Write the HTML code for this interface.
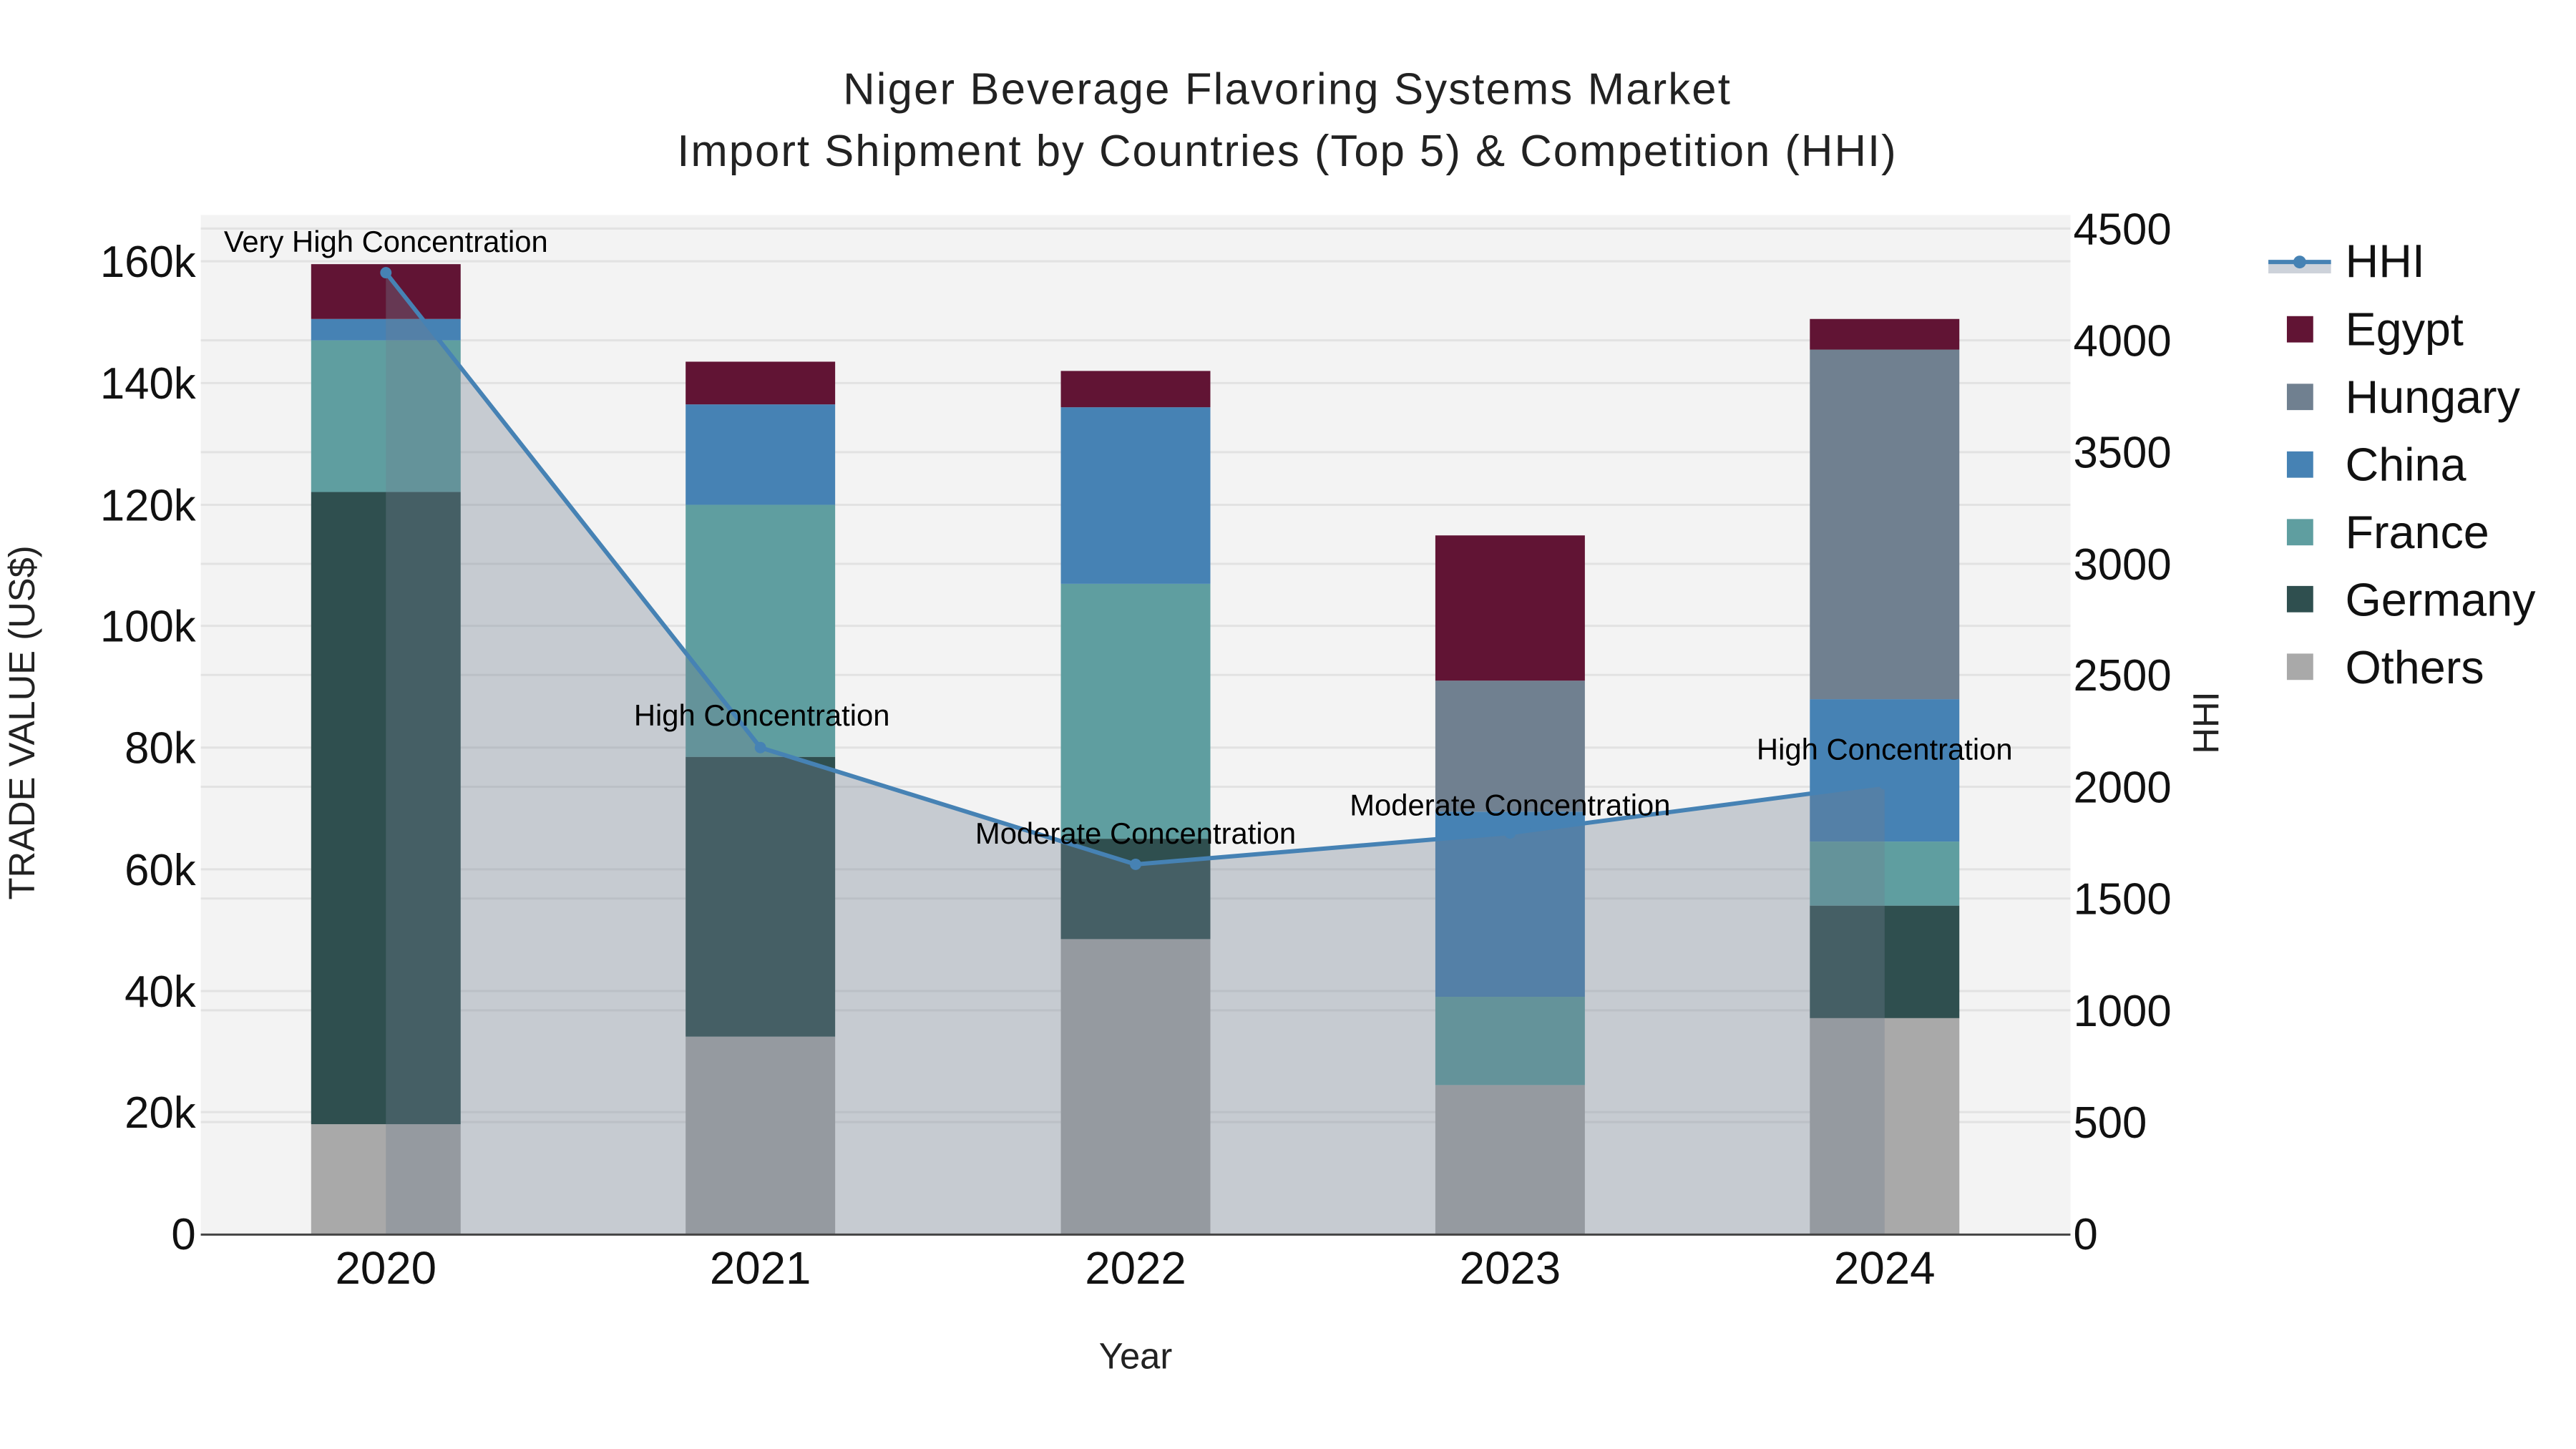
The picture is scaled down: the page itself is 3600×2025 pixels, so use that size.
<!DOCTYPE html>
<html><head><meta charset="utf-8"><style>html,body{margin:0;padding:0;background:#fff}svg{display:block}</style></head>
<body>
<svg width="3600" height="2025" viewBox="0 0 3600 2025" xmlns="http://www.w3.org/2000/svg" font-family="Liberation Sans, sans-serif">
<rect width="3600" height="2025" fill="#fff"/>
<g transform="scale(0.995)">
<rect x="282" y="302" width="2626" height="1431" fill="#f3f3f3"/>
<g stroke="#e2e2e2" stroke-width="3">
<line x1="282" x2="2908" y1="1562" y2="1562"/>
<line x1="282" x2="2908" y1="1392" y2="1392"/>
<line x1="282" x2="2908" y1="1221" y2="1221"/>
<line x1="282" x2="2908" y1="1050" y2="1050"/>
<line x1="282" x2="2908" y1="879" y2="879"/>
<line x1="282" x2="2908" y1="709" y2="709"/>
<line x1="282" x2="2908" y1="538" y2="538"/>
<line x1="282" x2="2908" y1="367" y2="367"/>
<line x1="282" x2="2908" y1="1576" y2="1576"/>
<line x1="282" x2="2908" y1="1419" y2="1419"/>
<line x1="282" x2="2908" y1="1262" y2="1262"/>
<line x1="282" x2="2908" y1="1105" y2="1105"/>
<line x1="282" x2="2908" y1="948" y2="948"/>
<line x1="282" x2="2908" y1="792" y2="792"/>
<line x1="282" x2="2908" y1="635" y2="635"/>
<line x1="282" x2="2908" y1="478" y2="478"/>
<line x1="282" x2="2908" y1="321" y2="321"/>
</g>
<rect x="437" y="1579" width="210" height="154" fill="#a9a9a9"/>
<rect x="437" y="691" width="210" height="888" fill="#2f4f4f"/>
<rect x="437" y="478" width="210" height="213" fill="#5f9ea0"/>
<rect x="437" y="448" width="210" height="30" fill="#4682b4"/>
<rect x="437" y="371" width="210" height="77" fill="#611434"/>
<rect x="963" y="1456" width="210" height="277" fill="#a9a9a9"/>
<rect x="963" y="1063" width="210" height="393" fill="#2f4f4f"/>
<rect x="963" y="709" width="210" height="354" fill="#5f9ea0"/>
<rect x="963" y="568" width="210" height="141" fill="#4682b4"/>
<rect x="963" y="508" width="210" height="60" fill="#611434"/>
<rect x="1490" y="1319" width="210" height="414" fill="#a9a9a9"/>
<rect x="1490" y="1178" width="210" height="141" fill="#2f4f4f"/>
<rect x="1490" y="820" width="210" height="358" fill="#5f9ea0"/>
<rect x="1490" y="572" width="210" height="248" fill="#4682b4"/>
<rect x="1490" y="521" width="210" height="51" fill="#611434"/>
<rect x="2016" y="1524" width="210" height="209" fill="#a9a9a9"/>
<rect x="2016" y="1400" width="210" height="124" fill="#5f9ea0"/>
<rect x="2016" y="1140" width="210" height="260" fill="#4682b4"/>
<rect x="2016" y="956" width="210" height="184" fill="#708090"/>
<rect x="2016" y="752" width="210" height="204" fill="#611434"/>
<rect x="2542" y="1430" width="210" height="303" fill="#a9a9a9"/>
<rect x="2542" y="1272" width="210" height="158" fill="#2f4f4f"/>
<rect x="2542" y="1182" width="210" height="90" fill="#5f9ea0"/>
<rect x="2542" y="982" width="210" height="200" fill="#4682b4"/>
<rect x="2542" y="491" width="210" height="491" fill="#708090"/>
<rect x="2542" y="448" width="210" height="43" fill="#611434"/>
<polygon points="542,383 1068,1050 1595,1214 2121,1170 2647,1101 2647,1733 542,1733" fill="rgba(110,125,145,0.34)"/>
<polyline points="542,383 1068,1050 1595,1214 2121,1170 2647,1101" fill="none" stroke="#4682b4" stroke-width="6"/>
<g fill="#4682b4"><circle cx="542" cy="383" r="8"/><circle cx="1068" cy="1050" r="8"/><circle cx="1595" cy="1214" r="8"/><circle cx="2121" cy="1170" r="8"/><circle cx="2647" cy="1101" r="8"/></g>
<line x1="282" x2="2908" y1="1734" y2="1734" stroke="#444" stroke-width="3"/>
<g font-size="42" fill="#000" text-anchor="middle">
<text x="542" y="354">Very High Concentration</text>
<text x="1070" y="1019">High Concentration</text>
<text x="1595" y="1185">Moderate Concentration</text>
<text x="2121" y="1145">Moderate Concentration</text>
<text x="2647" y="1067">High Concentration</text>
</g>
<g font-size="62" fill="#111" text-anchor="end">
<text x="275" y="1755">0</text>
<text x="275" y="1584">20k</text>
<text x="275" y="1414">40k</text>
<text x="275" y="1243">60k</text>
<text x="275" y="1072">80k</text>
<text x="275" y="901">100k</text>
<text x="275" y="731">120k</text>
<text x="275" y="560">140k</text>
<text x="275" y="389">160k</text>
</g>
<g font-size="62" fill="#111" text-anchor="start">
<text x="2912" y="1755">0</text>
<text x="2912" y="1598">500</text>
<text x="2912" y="1441">1000</text>
<text x="2912" y="1284">1500</text>
<text x="2912" y="1127">2000</text>
<text x="2912" y="970">2500</text>
<text x="2912" y="814">3000</text>
<text x="2912" y="657">3500</text>
<text x="2912" y="500">4000</text>
<text x="2912" y="343">4500</text>
</g>
<g font-size="64" fill="#111" text-anchor="middle">
<text x="542" y="1803">2020</text>
<text x="1068" y="1803">2021</text>
<text x="1595" y="1803">2022</text>
<text x="2121" y="1803">2023</text>
<text x="2647" y="1803">2024</text>
</g>
<text x="1595" y="1922" font-size="51" text-anchor="middle" fill="#222">Year</text>
<text transform="translate(48,1015) rotate(-90)" font-size="51" text-anchor="middle" fill="#222">TRADE VALUE (US$)</text>
<text transform="translate(3116,1015) rotate(-90)" font-size="51" text-anchor="middle" fill="#222">HHI</text>
<text x="1807" y="146" font-size="62" text-anchor="middle" fill="#222" textLength="1246">Niger Beverage Flavoring Systems Market</text>
<text x="1807" y="233" font-size="62" text-anchor="middle" fill="#222" textLength="1712">Import Shipment by Countries (Top 5) &amp; Competition (HHI)</text>
<rect x="3186" y="368" width="88" height="16" fill="#cdd2da"/>
<line x1="3186" x2="3274" y1="368" y2="368" stroke="#4682b4" stroke-width="6"/>
<circle cx="3230" cy="368" r="9" fill="#4682b4"/>
<rect x="3212" y="444" width="37" height="37" fill="#611434"/>
<rect x="3212" y="539" width="37" height="37" fill="#708090"/>
<rect x="3212" y="634" width="37" height="37" fill="#4682b4"/>
<rect x="3212" y="729" width="37" height="37" fill="#5f9ea0"/>
<rect x="3212" y="823" width="37" height="37" fill="#2f4f4f"/>
<rect x="3212" y="918" width="37" height="37" fill="#a9a9a9"/>
<g font-size="65" fill="#111">
<text x="3294" y="389">HHI</text>
<text x="3294" y="485">Egypt</text>
<text x="3294" y="580">Hungary</text>
<text x="3294" y="675">China</text>
<text x="3294" y="770">France</text>
<text x="3294" y="865">Germany</text>
<text x="3294" y="960">Others</text>
</g>
</g>
</svg>
</body></html>
